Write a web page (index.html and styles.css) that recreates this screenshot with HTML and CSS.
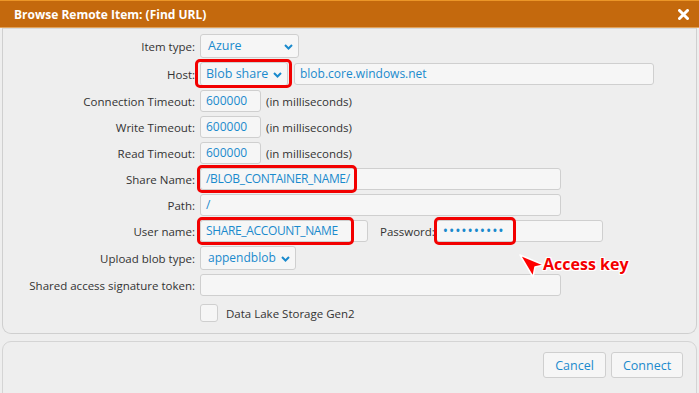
FILE: index.html
```html
<!DOCTYPE html>
<html lang="en">
<head>
    <meta charset="UTF-8">
    <meta name="viewport" content="width=device-width, initial-scale=1.0">
    <title>Browse Remote Item</title>
    <link rel="stylesheet" href="styles.css">
</head>
<body>
    <div class="dialog">
        <div class="titlebar">
            <span class="title">Browse Remote Item: (Find URL)</span>
            <svg class="close" width="11" height="11" viewBox="0 0 11 11">
                <path d="M1.5 1.5 L9.5 9.5 M9.5 1.5 L1.5 9.5" stroke="#fff" stroke-width="3" stroke-linecap="round"/>
            </svg>
        </div>

        <div class="panel">
            <div class="form">
                <div class="label">Item type:</div>
                <div class="field">
                    <div class="select w-azure">Azure
                        <svg class="chev" width="9" height="6" viewBox="0 0 9 6"><path d="M1 1 L4.5 4.5 L8 1" fill="none" stroke="#1a8acd" stroke-width="2"/></svg>
                    </div>
                </div>

                <div class="label">Host:</div>
                <div class="field">
                    <div class="marked">
                        <div class="select w-blob">Blob share
                            <svg class="chev" width="9" height="6" viewBox="0 0 9 6"><path d="M1 1 L4.5 4.5 L8 1" fill="none" stroke="#1a8acd" stroke-width="2"/></svg>
                        </div>
                        <span class="mark mark-host"></span>
                    </div>
                    <div class="input w-host">blob.core.windows.net</div>
                </div>

                <div class="label">Connection Timeout:</div>
                <div class="field">
                    <div class="input w-num">600000</div>
                    <span class="note">(in milliseconds)</span>
                </div>

                <div class="label">Write Timeout:</div>
                <div class="field">
                    <div class="input w-num">600000</div>
                    <span class="note">(in milliseconds)</span>
                </div>

                <div class="label">Read Timeout:</div>
                <div class="field">
                    <div class="input w-num">600000</div>
                    <span class="note">(in milliseconds)</span>
                </div>

                <div class="label">Share Name:</div>
                <div class="field">
                    <div class="marked">
                        <div class="input w-long caps">/BLOB_CONTAINER_NAME/</div>
                        <span class="mark mark-share"></span>
                    </div>
                </div>

                <div class="label">Path:</div>
                <div class="field">
                    <div class="input w-long">/</div>
                </div>

                <div class="label">User name:</div>
                <div class="field">
                    <div class="marked">
                        <div class="input w-user caps">SHARE_ACCOUNT_NAME</div>
                        <span class="mark mark-user"></span>
                    </div>
                    <span class="inline-label">Password:</span>
                    <div class="marked">
                        <div class="input w-pass dots">&bull;&bull;&bull;&bull;&bull;&bull;&bull;&bull;&bull;&bull;</div>
                        <span class="mark mark-pass"></span>
                    </div>
                </div>

                <div class="label">Upload blob type:</div>
                <div class="field">
                    <div class="select w-append">appendblob
                        <svg class="chev" width="9" height="6" viewBox="0 0 9 6"><path d="M1 1 L4.5 4.5 L8 1" fill="none" stroke="#1a8acd" stroke-width="2"/></svg>
                    </div>
                </div>

                <div class="label">Shared access signature token:</div>
                <div class="field">
                    <div class="input w-long"></div>
                </div>

                <div class="label"></div>
                <div class="field check-row">
                    <span class="checkbox"></span>
                    <span class="check-label">Data Lake Storage Gen2</span>
                </div>
            </div>
        </div>

        <div class="footer">
            <button class="button cancel">Cancel</button>
            <button class="button connect">Connect</button>
        </div>

        <div class="callout">
            <svg width="28" height="26" viewBox="0 0 28 26">
                <path d="M2 2 L26 12 L17 14 L15 24 Z" fill="#f00" stroke="#fff" stroke-width="1.5" stroke-linejoin="round"/>
            </svg>
            <span class="callout-text">Access key</span>
        </div>
    </div>
</body>
</html>
```

FILE: styles.css
```css
body {
    margin: 0;
    background: #eeeeee;
    font-family: "Open Sans", "Noto Sans", sans-serif;
    font-size: 11.5px;
    color: #333;
}
.dialog {
    position: relative;
    height: 393px;
    overflow: hidden;
}
.titlebar {
    height: 26px;
    background: #c4690d;
    border-top: 1px solid #eb9628;
    border-bottom: 1px solid #e2a25a;
    display: flex;
    align-items: center;
    justify-content: space-between;
    padding: 0 10px 0 14px;
}
.title {
    color: #fff;
    font-weight: bold;
    font-size: 12px;
}
.close {
    display: block;
}
.panel {
    margin: 0 2px;
    border: 1px solid #cfcfcf;
    border-top-color: #d8d8d8;
    border-radius: 0 0 9px 9px;
    padding: 5px 0 11px;
}
.form {
    display: grid;
    grid-template-columns: 192px 1fr;
    column-gap: 5px;
    row-gap: 4px;
    align-items: center;
}
.label {
    text-align: right;
}
.field {
    display: flex;
    align-items: center;
}
.input,
.select {
    box-sizing: border-box;
    height: 22px;
    line-height: 20px;
    border: 1px solid #cfcfcf;
    border-radius: 3px;
    background: #f6f6f6;
    color: #1a8acd;
    padding: 0 5px;
    font-size: 12px;
    white-space: nowrap;
    overflow: hidden;
}
.caps {
    letter-spacing: -0.35px;
}
.select {
    height: 24px;
    line-height: 22px;
    padding: 0 0 0 7px;
    position: relative;
    font-size: 12.5px;
}
.chev {
    position: absolute;
    right: 5px;
    top: 9px;
    display: block;
}
.w-azure { width: 99px; }
.w-blob { width: 88px; padding-left: 5px; }
.w-append { width: 96px; font-size: 12px; }
.w-host { width: 360px; margin-left: 6px; }
.w-num { width: 61px; }
.w-long { width: 361px; }
.w-user { width: 168px; }
.w-pass { width: 167px; }
.dots {
    font-size: 14px;
    letter-spacing: 0.9px;
    padding-left: 6px;
}
.note {
    margin-left: 5px;
}
.inline-label {
    margin: 0 1px 0 12px;
}
.marked {
    position: relative;
}
.mark {
    position: absolute;
    top: -3px;
    left: -3px;
    height: 22px;
    border: 3px solid #f20000;
    border-radius: 5px;
}
.mark-host {
    left: -5px;
    top: -3px;
    width: 91px;
    height: 23px;
}
.mark-share { width: 154px; }
.mark-user { width: 151px; }
.mark-pass { left: -2px; width: 76px; }
.check-row {
    margin-top: 4px;
}
.checkbox {
    box-sizing: border-box;
    width: 18px;
    height: 18px;
    border: 1px solid #cfcfcf;
    border-radius: 3px;
    background: #f6f6f6;
}
.check-label {
    margin-left: 8px;
}
.footer {
    margin: 7px 2px 0;
    height: 60px;
    border: 1px solid #d4d4d4;
    border-radius: 9px 9px 0 0;
    display: flex;
    justify-content: flex-end;
    align-items: flex-start;
    gap: 5px;
    padding: 10px 13px 0 0;
}
.button {
    height: 26px;
    border: 1px solid #cfcfcf;
    border-radius: 3px;
    background: #f6f6f6;
    color: #1a8acd;
    font-family: "Open Sans", "Noto Sans", sans-serif;
    font-size: 12.5px;
    padding: 0;
    cursor: pointer;
}
.cancel { width: 63px; }
.connect { width: 72px; }
.callout {
    position: absolute;
    left: 518px;
    top: 253px;
    display: flex;
    align-items: flex-start;
}
.callout svg {
    display: block;
}
.callout-text {
    margin-left: -3px;
    color: #f40000;
    font-weight: bold;
    font-size: 16px;
    line-height: 20px;
    margin-top: 1px;
    text-shadow: 1px 0 0 #fff, -1px 0 0 #fff, 0 1px 0 #fff, 0 -1px 0 #fff, 1px 1px 0 #fff, -1px -1px 0 #fff, 1px -1px 0 #fff, -1px 1px 0 #fff;
}
```
